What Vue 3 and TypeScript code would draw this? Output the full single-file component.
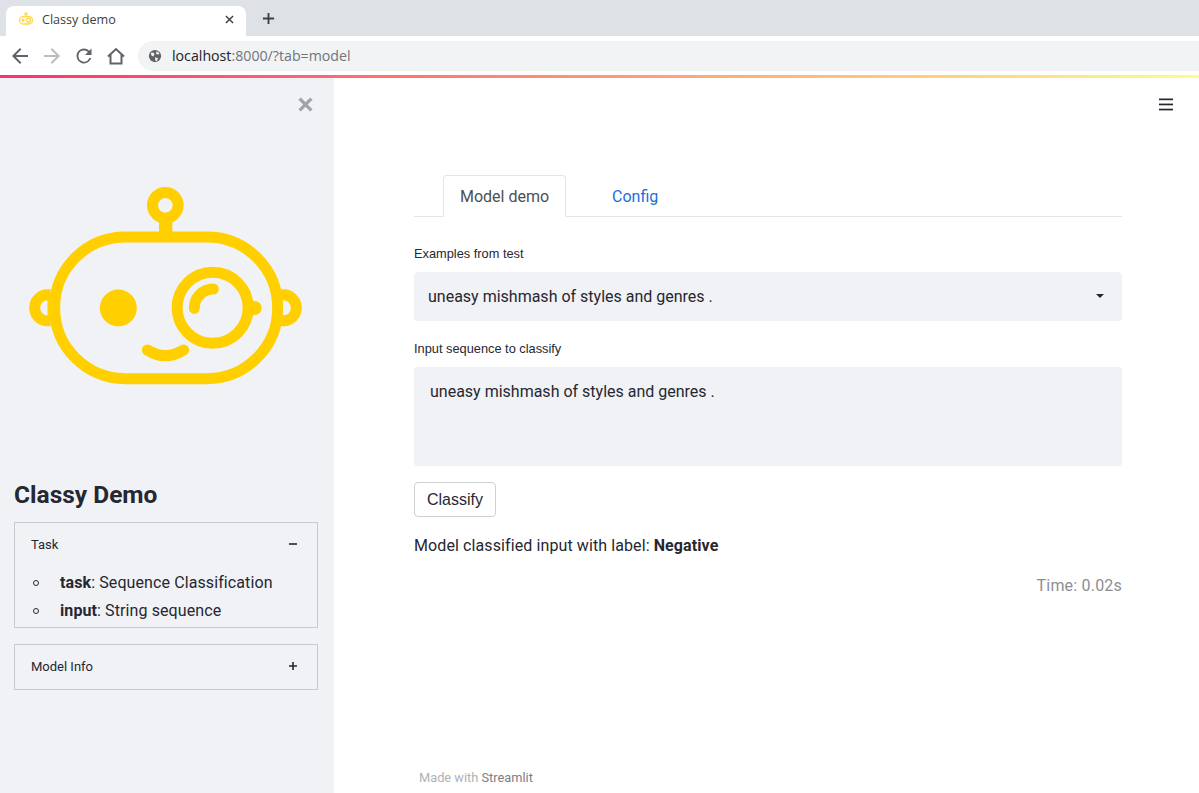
<template>
  <div class="window">
    <div class="tabstrip">
      <div class="browser-tab">
        <svg class="favicon" viewBox="0 0 16 16" fill="none" stroke="#ffd84d" stroke-width="1.300">
          <rect x="1.500" y="5.500" width="13" height="7.500" rx="3.750" />
          <circle cx="8" cy="3" r="1.100" />
          <circle cx="10.500" cy="9.250" r="2" />
          <circle cx="5" cy="9.250" r="1" fill="#ffd84d" />
        </svg>
        <span class="tab-title">Classy demo</span>
        <svg class="tab-close" viewBox="0 0 10 10" stroke="#3c4043" stroke-width="1.600">
          <path d="M1 1l8 8M9 1l-8 8" />
        </svg>
      </div>
      <svg class="new-tab" viewBox="0 0 14 14" stroke="#3c4043" stroke-width="2">
        <path d="M7 1v12M1 7h12" />
      </svg>
    </div>
    <div class="toolbar">
      <svg class="nav-icon" viewBox="0 0 24 24" fill="#5f6368">
        <path d="M20 11H7.830l5.590-5.590L12 4l-8 8 8 8 1.410-1.410L7.830 13H20v-2z" />
      </svg>
      <svg class="nav-icon" viewBox="0 0 24 24" fill="#babcbe">
        <path d="M12 4l-1.410 1.410L16.170 11H4v2h12.170l-5.580 5.590L12 20l8-8z" />
      </svg>
      <svg class="nav-icon" viewBox="0 0 24 24" fill="#5f6368">
        <path d="M17.300 6.700A7.500 7.500 0 0 0 12 4.500a7.500 7.500 0 1 0 7.250 9.500h-2A5.600 5.600 0 1 1 12 6.400c1.550 0 2.950.65 3.950 1.650L13 11h6.500V4.500l-2.200 2.200z" />
      </svg>
      <svg class="nav-icon" viewBox="0 0 24 24" fill="none" stroke="#5f6368" stroke-width="2">
        <path d="M4 12.500 12 5l8 7.500M6.500 11v8.500h11V11" />
      </svg>
      <div class="omnibox">
        <svg class="globe" viewBox="0 0 16 16">
          <circle cx="8" cy="8" r="7" fill="#5f6368" />
          <path d="M3 4.500 6 4l1.500 2L6 8.500 4 7.500zM10 2.500l3 2-1 2-3-1zM8 9.500l3.500 1-1.500 3.500-1.500-.5z" fill="#f1f3f4" />
        </svg>
        <span class="url"><span class="host">localhost</span>:8000/?tab=model</span>
      </div>
    </div>
    <div class="rainbow"></div>

    <div class="page">
      <aside class="sidebar">
        <div class="close-row">
          <svg class="close-icon" viewBox="0 0 14 14" stroke="#a3a4a8" stroke-width="3.200">
            <path d="M1.500 1.500l11 11M12.500 1.500l-11 11" />
          </svg>
        </div>
        <svg class="logo" viewBox="0 0 870 630" fill="none" stroke="#ffcf00" stroke-width="33">
          <rect x="104" y="171" width="669" height="425" rx="212" />
          <circle cx="436" cy="76" r="38.500" />
          <path d="M437 115v45" stroke-width="40" />
          <path d="M92 344.500H83A39 39 0 0 0 83 422.500H92" />
          <path d="M782 344.500H790A39 39 0 0 1 790 422.500H782" />
          <path d="M85.500 350v68" stroke-width="6" />
          <circle cx="295" cy="384" r="55.500" fill="#ffcf00" stroke="none" />
          <circle cx="578" cy="383" r="106.500" />
          <path d="M523 385A57 57 0 0 1 580 327" stroke-linecap="round" />
          <path d="M690 384h14" stroke-width="42" stroke-linecap="round" />
          <path d="M382 510Q436 544 491 510" stroke-linecap="round" />
        </svg>
        <h1 class="side-title">Classy Demo</h1>
        <section class="expander expander-open">
          <header class="expander-head">
            <span>Task</span>
            <svg class="toggle" viewBox="0 0 10 10" stroke="#262730" stroke-width="1.600"><path d="M1 5h8" /></svg>
          </header>
          <ul class="info-list">
            <li><b>task</b>: Sequence Classification</li>
            <li><b>input</b>: String sequence</li>
          </ul>
        </section>
        <section class="expander">
          <header class="expander-head">
            <span>Model Info</span>
            <svg class="toggle" viewBox="0 0 10 10" stroke="#262730" stroke-width="1.600"><path d="M1 5h8M5 1v8" /></svg>
          </header>
        </section>
      </aside>

      <main class="main">
        <div class="menu-row">
          <svg class="hamburger" viewBox="0 0 14 13" fill="#262730">
            <rect y="0.500" width="14" height="1.700" />
            <rect y="5.600" width="14" height="1.700" />
            <rect y="10.700" width="14" height="1.700" />
          </svg>
        </div>
        <div class="content">
          <nav class="tabs">
            <a class="tab tab-active">Model demo</a>
            <a class="tab tab-link">Config</a>
          </nav>
          <label class="field-label first">Examples from test</label>
          <div class="select">
            <span>{{ sample }}</span>
            <span class="caret"></span>
          </div>
          <label class="field-label second">Input sequence to classify</label>
          <div class="textarea">{{ sample }}</div>
          <button class="classify" type="button">Classify</button>
          <p class="result">Model classified input with label: <b>Negative</b></p>
          <p class="time">Time: 0.02s</p>
        </div>
        <footer class="footer">Made with <span class="footer-link">Streamlit</span></footer>
      </main>
    </div>
  </div>
</template>

<script setup lang="ts">
const sample = 'uneasy mishmash of styles and genres .'
</script>

<style>
html,
body {
  margin: 0;
  overflow: hidden;
}
</style>

<style scoped>
.window {
  height: 793px;
  display: flex;
  flex-direction: column;
  font-family: Roboto, sans-serif;
  color: #262730;
  background: #fff;
}

.tabstrip {
  height: 36px;
  flex: none;
  display: flex;
  align-items: flex-end;
  background: #dee1e6;
  padding-left: 6px;
}

.browser-tab {
  width: 240px;
  height: 30px;
  box-sizing: border-box;
  display: flex;
  align-items: center;
  background: #fff;
  border-radius: 8px 8px 0 0;
  padding: 0 10px 4px 12px;
  font-family: "Open Sans", sans-serif;
  font-size: 12.600px;
  color: #3c4043;
}

.favicon {
  width: 16px;
  height: 16px;
  flex: none;
}

.tab-title {
  margin-left: 8px;
  flex: 1;
}

.tab-close {
  width: 9px;
  height: 9px;
  margin-right: 2px;
}

.new-tab {
  width: 13px;
  height: 13px;
  margin: 0 0 11px 16px;
}

.toolbar {
  height: 39px;
  flex: none;
  display: flex;
  align-items: center;
  padding-left: 8px;
  gap: 8px;
  background: #fff;
}

.nav-icon {
  width: 24px;
  height: 24px;
  flex: none;
}

.omnibox {
  flex: 1;
  height: 30px;
  margin: 0 0 0 2px;
  display: flex;
  align-items: center;
  background: #f1f3f4;
  border-radius: 15px 0 0 15px;
  padding-left: 10px;
}

.globe {
  width: 14px;
  height: 14px;
  flex: none;
}

.url {
  margin-left: 10px;
  font-family: "Open Sans", sans-serif;
  font-size: 14.200px;
  color: #70757a;
}

.host {
  color: #202124;
}

.rainbow {
  height: 3px;
  flex: none;
  background: linear-gradient(90deg, #ff2f6e, #fffd80);
}

.page {
  flex: 1;
  min-height: 0;
  display: flex;
}

.sidebar {
  width: 334px;
  flex: none;
  box-sizing: border-box;
  padding: 0 16px 0 14px;
  background: #f0f2f6;
}

.close-row {
  display: flex;
  justify-content: flex-end;
  padding-top: 19px;
}

.close-icon {
  width: 15px;
  height: 15px;
  margin-right: 5px;
}

.logo {
  display: block;
  width: 290px;
  height: 210px;
  margin: 68px 0 0 6px;
}

.side-title {
  margin: 88px 0 0;
  font-size: 24.500px;
  line-height: 34px;
  font-weight: 700;
  color: #262730;
}

.expander {
  margin-top: 16px;
  border: 1px solid #c8cad0;
}

.side-title + .expander {
  margin-top: 10px;
}

.expander-head {
  height: 44px;
  box-sizing: border-box;
  display: flex;
  align-items: center;
  justify-content: space-between;
  padding: 0 19px 2px 16px;
  font-size: 13px;
}

.toggle {
  width: 10px;
  height: 10px;
}

.info-list {
  margin: 0;
  padding: 2px 0 2px 18px;
  list-style: none;
  font-size: 16px;
  letter-spacing: 0.1px;
  line-height: 28px;
}

.info-list li::before {
  content: "";
  display: inline-block;
  width: 4px;
  height: 4px;
  margin-right: 21px;
  vertical-align: 2px;
  border: 1px solid #262730;
  border-radius: 50%;
}

.main {
  flex: 1;
  min-width: 0;
  display: flex;
  flex-direction: column;
}

.menu-row {
  display: flex;
  justify-content: flex-end;
  padding: 20px 26px 0 0;
}

.hamburger {
  width: 14px;
  height: 13px;
}

.content {
  margin: 64px 77px 0 80px;
  flex: 1;
}

.tabs {
  height: 42px;
  box-sizing: border-box;
  display: flex;
  border-bottom: 1px solid #e3e4e8;
  padding-left: 29px;
}

.tab {
  height: 42px;
  box-sizing: border-box;
  display: flex;
  align-items: center;
  font-size: 16px;
}

.tab-active {
  width: 123px;
  justify-content: center;
  border: 1px solid #e3e4e8;
  border-bottom: 1px solid #fff;
  border-radius: 4px 4px 0 0;
  color: #495057;
}

.tab-link {
  margin-left: 46px;
  color: #1a6fdb;
}

.field-label {
  display: block;
  font-family: "Liberation Sans", sans-serif;
  font-size: 12.800px;
  line-height: 18px;
}

.first {
  margin-top: 28px;
}

.second {
  margin-top: 19px;
}

.select {
  height: 49px;
  box-sizing: border-box;
  margin-top: 9px;
  display: flex;
  align-items: center;
  justify-content: space-between;
  padding: 0 18px 1px 14px;
  background: #f0f2f6;
  border-radius: 4px;
  font-size: 16px;
}

.caret {
  width: 0;
  height: 0;
  border: 4px solid transparent;
  border-top-color: #262730;
  border-bottom: 0;
}

.textarea {
  height: 99px;
  box-sizing: border-box;
  margin-top: 9px;
  padding: 13px 16px;
  background: #f0f2f6;
  border-radius: 4px;
  font-size: 16px;
  line-height: 24px;
}

.classify {
  display: block;
  width: 82px;
  height: 35px;
  margin-top: 16px;
  padding: 0;
  background: #fff;
  border: 1px solid #cfd0d4;
  border-radius: 4px;
  color: #262730;
  font-family: "Liberation Sans", sans-serif;
  font-size: 16px;
}

.result {
  margin: 17px 0 0;
  font-size: 16px;
  letter-spacing: 0.1px;
  line-height: 24px;
}

.time {
  margin: 16px 0 0;
  text-align: right;
  font-size: 16px;
  letter-spacing: 0.2px;
  line-height: 24px;
  color: #8d8e93;
}

.footer {
  padding: 0 0 6px 85px;
  font-size: 12.800px;
  line-height: 18px;
  color: #b0b2b8;
}

.footer-link {
  color: #7c7e85;
}
</style>
